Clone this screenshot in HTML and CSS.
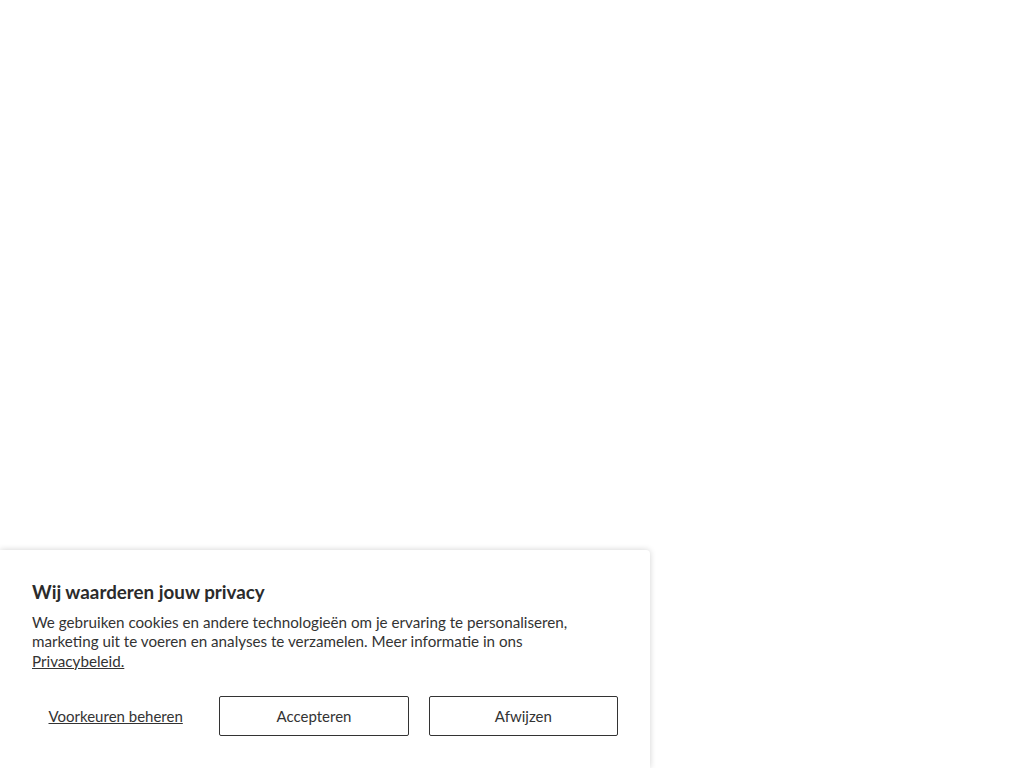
FILE: index.html
```html
<!DOCTYPE html>
<html lang="nl">
<head>
<meta charset="utf-8">
<title>Privacy</title>
<link rel="stylesheet" href="styles.css">
</head>
<body>
<div class="banner">
  <h2 class="title">Wij waarderen jouw privacy</h2>
  <p class="text">We gebruiken cookies en andere technologieën om je ervaring te personaliseren, marketing uit te voeren en analyses te verzamelen. Meer informatie in ons <a href="#" class="link">Privacybeleid.</a></p>
  <div class="actions">
    <button class="btn btn-link">Voorkeuren beheren</button>
    <button class="btn btn-outline">Accepteren</button>
    <button class="btn btn-outline">Afwijzen</button>
  </div>
</div>
</body>
</html>
```
FILE: styles.css
```css
html, body {
  margin: 0;
  padding: 0;
  height: 100%;
  background: #fff;
}
body {
  font-family: "Lato", "Noto Sans", sans-serif;
  color: #333;
  position: relative;
  overflow: hidden;
}
.banner {
  position: absolute;
  left: 0;
  bottom: 0;
  width: 650px;
  box-sizing: border-box;
  padding: 31px 32px 32px;
  background: #fff;
  border-top-right-radius: 4px;
  box-shadow: 0 0 6px rgba(0,0,0,0.18);
}
.title {
  margin: 0 0 11px;
  font-size: 18.8px;
  line-height: 21px;
  font-weight: 700;
  color: #2b2b2b;
}
.text {
  margin: 0;
  max-width: 560px;
  font-size: 15.2px;
  line-height: 19.5px;
  color: #333;
}
.link {
  color: #333;
  text-decoration: underline;
}
.actions {
  display: flex;
  gap: 20px;
  margin-top: 25px;
}
.btn {
  font-family: inherit;
  font-size: 15px;
  color: #333;
  background: #fff;
  height: 40px;
  border-radius: 2px;
  cursor: pointer;
}
.btn-link {
  border: 1px solid transparent;
  padding: 0 15.5px;
  text-decoration: underline;
  flex: none;
}
.btn-outline {
  flex: 1;
  border: 1px solid #333;
}
```
